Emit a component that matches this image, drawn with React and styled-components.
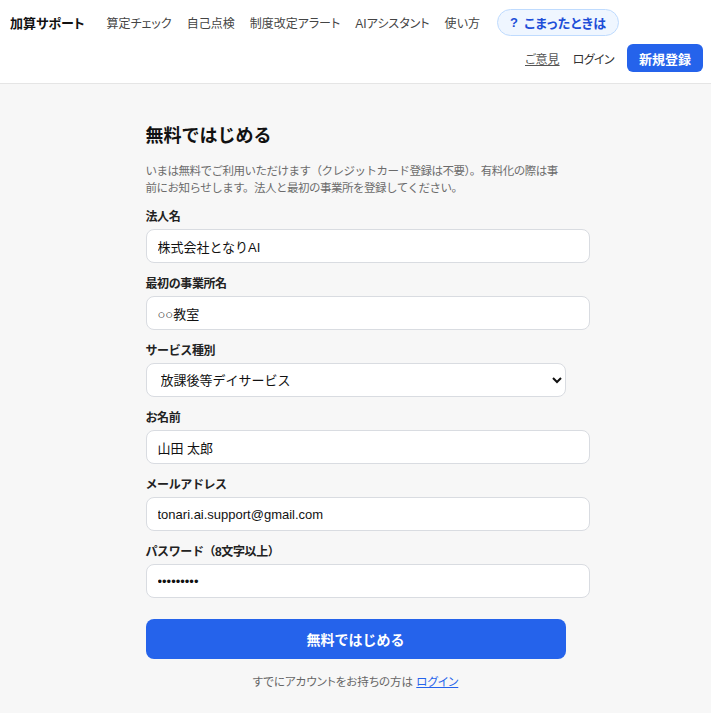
import styled, { createGlobalStyle } from "styled-components";

const GlobalStyle = createGlobalStyle`
  body {
    margin: 0;
    background: #f7f7f7;
    font-family: "Liberation Sans", "Noto Sans CJK JP", sans-serif;
    color: #111;
  }
`;

const Header = styled.header`
  background: #fff;
  border-bottom: 1px solid #e5e5e5;
  padding: 9px 8px 11px 10px;
  display: flex;
  flex-direction: column;
  gap: 8px;
`;

const TopRow = styled.div`
  display: flex;
  align-items: center;
  height: 27px;
`;

const Logo = styled.div`
  font-size: 13px;
  font-weight: bold;
  font-feature-settings: "palt";
  color: #111;
  margin-right: 22px;
`;

const Nav = styled.nav`
  display: flex;
  align-items: center;
  gap: 15px;
`;

const NavLink = styled.a`
  font-size: 12px;
  color: #444;
  font-feature-settings: "palt";
  text-decoration: none;
`;

const HelpPill = styled.a`
  display: inline-flex;
  align-items: center;
  gap: 6px;
  height: 25px;
  margin-left: 2px;
  padding: 0 12px;
  border: 1px solid #bfdbfe;
  background: #eff6ff;
  border-radius: 14px;
  color: #1d4ed8;
  font-size: 13px;
  font-weight: bold;
  font-feature-settings: "palt";
  letter-spacing: 0.3px;
  text-decoration: none;
`;

const BottomRow = styled.div`
  display: flex;
  justify-content: flex-end;
  align-items: center;
  gap: 13px;
`;

const TextLink = styled.a`
  font-size: 12px;
  color: ${props => props.$underline ? "#555" : "#333"};
  text-decoration: ${props => props.$underline ? "underline" : "none"};
  font-feature-settings: "palt";
  letter-spacing: ${props => props.$underline ? "0" : "-0.6px"};
`;

const SignupButton = styled.button`
  height: 28px;
  padding: 0 12px;
  border: none;
  border-radius: 6px;
  background: #2563eb;
  color: #fff;
  font-family: inherit;
  font-size: 13px;
  font-weight: bold;
`;

const Main = styled.main`
  padding: 40px 0 30px;
`;

const Form = styled.form`
  width: 420px;
  margin: 0 auto;
`;

const Title = styled.h1`
  margin: 0;
  font-size: 18px;
  line-height: 24px;
  font-weight: bold;
  color: #111;
`;

const Description = styled.p`
  margin: 15px 0 11px;
  font-size: 11.5px;
  letter-spacing: -0.5px;
  line-height: 17px;
  color: #6b6b6b;
`;

const Field = styled.div`
  margin-bottom: 12px;
`;

const Label = styled.label`
  display: block;
  font-size: 12px;
  line-height: 18px;
  font-weight: bold;
  letter-spacing: -0.4px;
  color: #222;
  margin-bottom: 3px;
`;

const Input = styled.input`
  display: block;
  width: 100%;
  height: 32px;
  padding: 0 11px;
  border: 1px solid #d9dce1;
  border-radius: 8px;
  background: #fff;
  font-family: inherit;
  font-size: 13px;
  color: #111;
  outline: none;
`;

const Select = styled.select`
  display: block;
  width: 100%;
  height: 34px;
  padding: 0 10px;
  border: 1px solid #d9dce1;
  border-radius: 8px;
  background: #fff;
  font-family: inherit;
  font-size: 13px;
  color: #111;
`;

const SubmitButton = styled.button`
  display: block;
  width: 100%;
  height: 40px;
  margin-top: 21px;
  border: none;
  border-radius: 8px;
  background: #2563eb;
  color: #fff;
  font-family: inherit;
  font-size: 14px;
  font-weight: bold;
`;

const Footnote = styled.p`
  margin: 14px 0 0;
  text-align: center;
  font-size: 11.5px;
  font-feature-settings: "palt";
  line-height: 18px;
  color: #666;

  a {
    color: #2563eb;
    text-decoration: underline;
  }
`;

const navItems = ["算定チェック", "自己点検", "制度改定アラート", "AIアシスタント", "使い方"];

const fields = [
  { label: "法人名", value: "株式会社となりAI" },
  { label: "最初の事業所名", value: "○○教室" },
  { label: "サービス種別", select: true, value: "放課後等デイサービス" },
  { label: "お名前", value: "山田 太郎" },
  { label: "メールアドレス", value: "tonari.ai.support@gmail.com", type: "email" },
  { label: "パスワード（8文字以上）", value: "password1", type: "password" },
];

const App = () => {
  return (
    <>
      <GlobalStyle />
      <Header>
        <TopRow>
          <Logo>加算サポート</Logo>
          <Nav>
            {navItems.map(item => (
              <NavLink key={item} href="#">{item}</NavLink>
            ))}
            <HelpPill href="#"><span>?</span>こまったときは</HelpPill>
          </Nav>
        </TopRow>
        <BottomRow>
          <TextLink href="#" $underline>ご意見</TextLink>
          <TextLink href="#">ログイン</TextLink>
          <SignupButton type="button">新規登録</SignupButton>
        </BottomRow>
      </Header>

      <Main>
        <Form onSubmit={e => e.preventDefault()}>
          <Title>無料ではじめる</Title>
          <Description>
            いまは無料でご利用いただけます（クレジットカード登録は不要）。有料化の際は事前にお知らせします。法人と最初の事業所を登録してください。
          </Description>

          {fields.map(f => (
            <Field key={f.label}>
              <Label>{f.label}</Label>
              {f.select ? (
                <Select defaultValue={f.value}>
                  <option>放課後等デイサービス</option>
                  <option>児童発達支援</option>
                </Select>
              ) : (
                <Input type={f.type || "text"} defaultValue={f.value} />
              )}
            </Field>
          ))}

          <SubmitButton type="submit">無料ではじめる</SubmitButton>
          <Footnote>
            すでにアカウントをお持ちの方は <a href="#">ログイン</a>
          </Footnote>
        </Form>
      </Main>
    </>
  );
};

export default App;
